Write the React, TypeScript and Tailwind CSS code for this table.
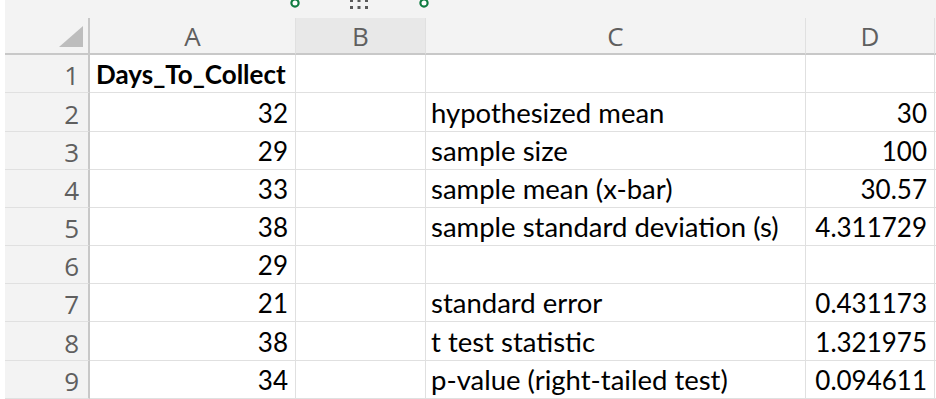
const rows: { n: number; a: string; c: string; d: string; h: string }[] = [
  { n: 1, a: 'Days_To_Collect', c: '', d: '', h: 'h-[38px]' },
  { n: 2, a: '32', c: 'hypothesized mean', d: '30', h: 'h-[39px]' },
  { n: 3, a: '29', c: 'sample size', d: '100', h: 'h-[38px]' },
  { n: 4, a: '33', c: 'sample mean (x-bar)', d: '30.57', h: 'h-[38px]' },
  { n: 5, a: '38', c: 'sample standard deviation (s)', d: '4.311729', h: 'h-[38px]' },
  { n: 6, a: '29', c: '', d: '', h: 'h-[38px]' },
  { n: 7, a: '21', c: 'standard error', d: '0.431173', h: 'h-[38px]' },
  { n: 8, a: '38', c: 't test statistic', d: '1.321975', h: 'h-[39px]' },
  { n: 9, a: '34', c: 'p-value (right-tailed test)', d: '0.094611', h: 'h-[38px]' },
]

const cols = ['A', 'B', 'C', 'D']
const widths = ['w-[206px]', 'w-[130px]', 'w-[380px]', 'w-[129px]']

function SelectionHandles() {
  return (
    <svg className="absolute left-0 top-0" width="936" height="18" viewBox="0 0 936 18">
      <circle cx="295" cy="3" r="3.6" fill="#fff" stroke="#107c41" strokeWidth="2.2" />
      <circle cx="424" cy="3" r="3.6" fill="#fff" stroke="#107c41" strokeWidth="2.2" />
      {[350, 357.5, 365].map((x) => (
        <g key={x} fill="#5a5a5a">
          <rect x={x} y="-1" width="3" height="3" />
          <rect x={x} y="6" width="3" height="3" />
        </g>
      ))}
    </svg>
  )
}

export default function App() {
  return (
    <div className="relative flex h-[399px] w-[936px] overflow-hidden bg-white" style={{ fontFamily: 'Lato, "Liberation Sans", sans-serif' }}>
      <div className="w-[5px] shrink-0 bg-white" />
      <div className="flex flex-1 flex-col">
        {/* top strip */}
        <div className="h-[18px] bg-[#f3f3f3]" />

        {/* column headers */}
        <div className="flex h-[37px] bg-[#f3f3f3]">
          <div className="relative w-[85px] shrink-0 border-b-2 border-r-2 border-[#c8c8c8]">
            <svg className="absolute left-[54px] top-[8px]" width="25" height="22" viewBox="0 0 25 22">
              <polygon points="0,21 24,21 24,0" fill="#bdbdbd" />
            </svg>
          </div>
          {cols.map((c, i) => (
            <div
              key={c}
              className={`${widths[i]} flex shrink-0 items-center justify-center border-b-2 border-r border-b-[#c8c8c8] border-r-[#e0e0e0] pt-[2px] text-[26px] text-[#5f5f5f] ${c === 'B' ? 'bg-[#e8e8e8]' : ''}`}
              style={{ fontFamily: '"Open Sans", "Noto Sans", sans-serif' }}
            >
              {c}
            </div>
          ))}
          <div className="flex-1 border-b-2 border-[#c8c8c8]" />
        </div>

        {/* data rows */}
        {rows.map((r) => (
          <div key={r.n} className={`flex ${r.h}`}>
            <div
              className="flex w-[85px] shrink-0 items-end justify-end border-b border-r-2 border-b-[#e0e0e0] border-r-[#c8c8c8] bg-[#f3f3f3] pb-[4px] pr-[9px] text-[26px] leading-none text-[#5f5f5f]"
              style={{ fontFamily: '"Open Sans", "Noto Sans", sans-serif' }}
            >
              {r.n}
            </div>
            <div
              className={`flex w-[206px] shrink-0 items-end border-b border-r border-[#e0e0e0] pb-[5px] text-[26px] leading-none text-black ${r.n === 1 ? 'justify-start pl-[6px] font-bold' : 'justify-end pr-[7px]'}`}
            >
              {r.a}
            </div>
            <div className="w-[130px] shrink-0 border-b border-r border-[#e0e0e0]" />
            <div className="flex w-[380px] shrink-0 items-end border-b border-r border-[#e0e0e0] pb-[5px] pl-[5px] text-[27.5px] leading-none text-black">
              {r.c}
            </div>
            <div className="flex w-[129px] shrink-0 items-end justify-end border-b border-r border-[#e0e0e0] pb-[5px] pr-[7px] text-[26px] leading-none text-black">
              {r.d}
            </div>
            <div className="flex-1 border-b border-[#e0e0e0]" />
          </div>
        ))}
      </div>
      <SelectionHandles />
    </div>
  )
}
